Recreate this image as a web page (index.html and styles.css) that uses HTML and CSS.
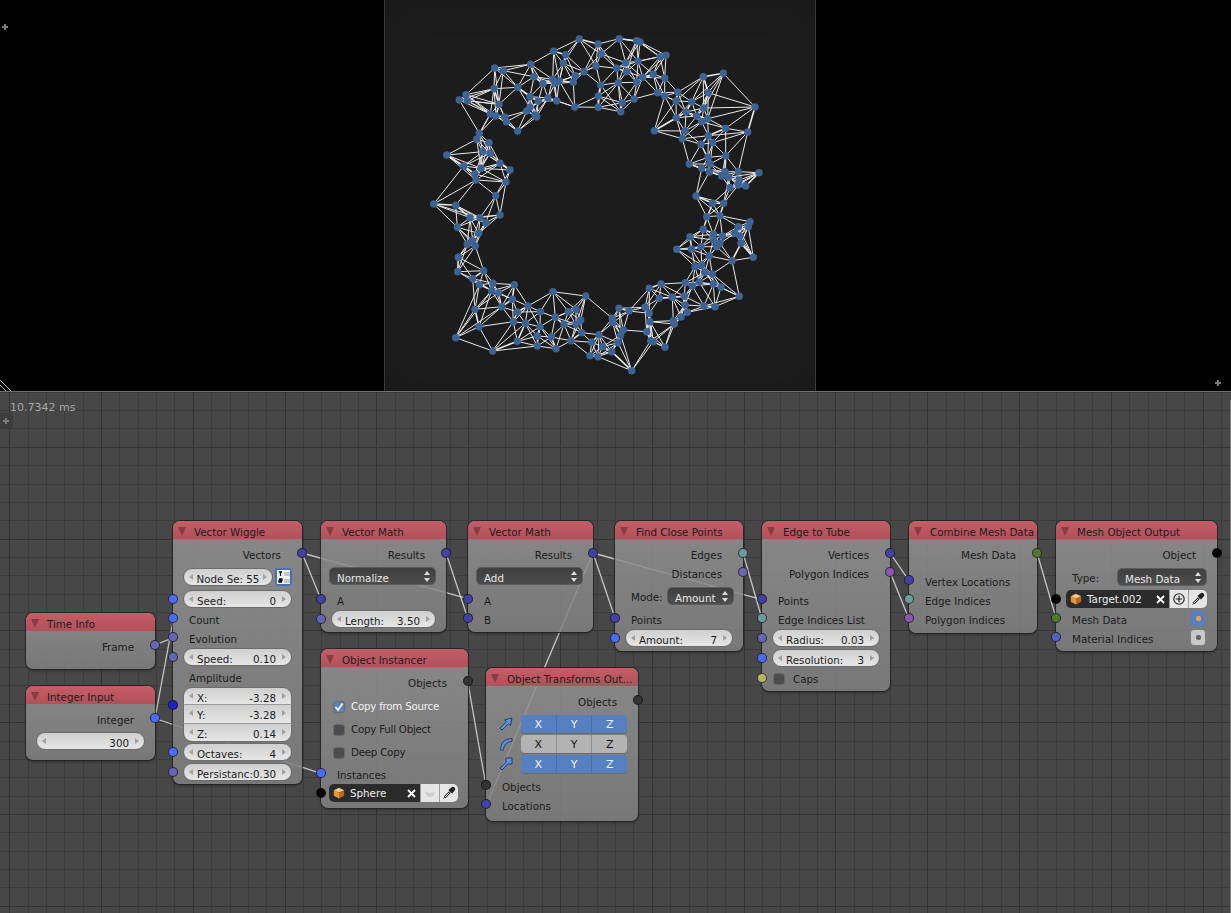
FILE: index.html
```html
<!DOCTYPE html>
<html lang="en">
<head>
<meta charset="utf-8">
<title>Animation Nodes</title>
<link rel="stylesheet" href="styles.css">
</head>
<body>
<section class="viewport">
  <span class="plus plus-tl"></span>
  <div class="camera">
    <svg id="mesh" class="mesh-view" viewBox="385 0 430 391" width="430" height="391"></svg>
  </div>
  <span class="plus plus-br"></span>
  <svg class="corner" viewBox="0 0 12 14" width="12" height="14">
    <path d="M0 3 L11 14 M0 8 L6 14" stroke="#b8b8b8" fill="none"/>
  </svg>
</section>

<section class="editor">
  <div class="timing">10.7342 ms</div>
  <div class="corner-btn"><span class="plus"></span></div>

  <svg class="wires" viewBox="0 391 1231 522" width="1231" height="522">
    <path d="M155 645 L173.5 637.7"/>
    <path d="M155 718.5 L173.5 618.5"/>
    <path d="M155 718.5 L320.7 773.3"/>
    <path d="M302 553 L320.7 598.7"/>
    <path d="M302 553 L467.7 598.7"/>
    <path d="M446 553 L467.7 618"/>
    <path d="M593 553 L615 618"/>
    <path d="M593 553 L762 599.7"/>
    <path d="M593 553 L486 806"/>
    <path d="M743 553 L762 619"/>
    <path d="M467.7 681.5 L486 786"/>
    <path d="M890 553 L909 580.7"/>
    <path d="M890 572 L909 619"/>
    <path d="M1037 552.7 L1056 618"/>
  </svg>

  <article class="node n-time">
    <header class="head"><i class="tri"></i>Time Info</header>
    <div class="body">
      <div class="row out"><span>Frame</span><i class="sock sock-r float"></i></div>
    </div>
  </article>

  <article class="node n-int">
    <header class="head"><i class="tri"></i>Integer Input</header>
    <div class="body">
      <div class="row out"><span>Integer</span><i class="sock sock-r int"></i></div>
      <div class="row gap4"><div class="num"><i class="al"></i><span></span><span>300</span><i class="ar"></i></div></div>
    </div>
  </article>

  <article class="node n-wiggle">
    <header class="head"><i class="tri"></i>Vector Wiggle</header>
    <div class="body">
      <div class="row out"><span>Vectors</span><i class="sock sock-r vec"></i></div>
      <div class="row gap4 split">
        <div class="num num-c"><i class="al"></i><span>Node Se: 55</span><i class="ar"></i></div>
        <div class="listbtn">
          <svg viewBox="0 0 14 14" width="14" height="14"><rect width="14" height="14" fill="#f2f2f2"/><path d="M2 2 H5 M3.5 2 V6 M2 9 H5 V10.5 H2 V12 H5" stroke="#111" stroke-width="1.3" fill="none"/><path d="M7 3 H13 M7 5 H13 M7 10 H13 M7 12 H13" stroke="#999"/></svg>
        </div>
      </div>
      <div class="row gap4"><i class="sock int"></i><div class="num"><i class="al"></i><span>Seed:</span><span>0</span><i class="ar"></i></div></div>
      <div class="row in"><i class="sock int"></i><span>Count</span></div>
      <div class="row in"><i class="sock float"></i><span>Evolution</span></div>
      <div class="row"><i class="sock float"></i><div class="num"><i class="al"></i><span>Speed:</span><span>0.10</span><i class="ar"></i></div></div>
      <div class="row in"><span>Amplitude</span></div>
      <div class="vecgroup">
        <i class="sock sock-group vecdeep"></i>
        <div class="num num-top"><i class="al"></i><span>X:</span><span>-3.28</span><i class="ar"></i></div>
        <div class="num num-mid"><i class="al"></i><span>Y:</span><span>-3.28</span><i class="ar"></i></div>
        <div class="num num-bot"><i class="al"></i><span>Z:</span><span>0.14</span><i class="ar"></i></div>
      </div>
      <div class="row"><i class="sock int"></i><div class="num"><i class="al"></i><span>Octaves:</span><span>4</span><i class="ar"></i></div></div>
      <div class="row"><i class="sock float"></i><div class="num"><i class="al"></i><span>Persistanc:</span><span>0.30</span><i class="ar"></i></div></div>
    </div>
  </article>

  <article class="node n-math1">
    <header class="head"><i class="tri"></i>Vector Math</header>
    <div class="body">
      <div class="row out"><span>Results</span><i class="sock sock-r vec"></i></div>
      <div class="row gap4"><div class="enum"><span>Normalize</span><i class="updown"></i></div></div>
      <div class="row gap4 in"><i class="sock vec"></i><span>A</span></div>
      <div class="row"><i class="sock float"></i><div class="num"><i class="al"></i><span>Length:</span><span>3.50</span><i class="ar"></i></div></div>
    </div>
  </article>

  <article class="node n-math2">
    <header class="head"><i class="tri"></i>Vector Math</header>
    <div class="body">
      <div class="row out"><span>Results</span><i class="sock sock-r vec"></i></div>
      <div class="row gap4"><div class="enum"><span>Add</span><i class="updown"></i></div></div>
      <div class="row gap4 in"><i class="sock vec"></i><span>A</span></div>
      <div class="row in"><i class="sock vec"></i><span>B</span></div>
    </div>
  </article>

  <article class="node n-inst">
    <header class="head"><i class="tri"></i>Object Instancer</header>
    <div class="body">
      <div class="row out"><span>Objects</span><i class="sock sock-r objlist"></i></div>
      <div class="row-check first"><span class="check on"><svg viewBox="0 0 12 12" width="12" height="12"><path d="M2.5 6 L5 9 L9.5 2.5" stroke="#fff" stroke-width="1.8" fill="none"/></svg></span><span class="light">Copy from Source</span></div>
      <div class="row-check"><span class="check"></span><span>Copy Full Object</span></div>
      <div class="row-check"><span class="check"></span><span>Deep Copy</span></div>
      <div class="row in"><i class="sock int"></i><span>Instances</span></div>
      <div class="row"><i class="sock obj"></i>
        <div class="idfield">
          <div class="idname">
            <svg class="cube" viewBox="0 0 12 12" width="12" height="12"><path d="M6 .8 L11.2 3.2 L6 5.8 L.8 3.2 Z" fill="#f5c98c"/><path d="M.8 3.2 L6 5.8 V11.4 L.8 8.8 Z" fill="#e8953a"/><path d="M11.2 3.2 L6 5.8 V11.4 L11.2 8.8 Z" fill="#b96a1e"/></svg>
            <span class="idtext">Sphere</span>
            <svg class="xmark" viewBox="0 0 9 9" width="9" height="9"><path d="M1 1 L8 8 M8 1 L1 8" stroke="#fff" stroke-width="1.8"/></svg>
          </div>
          <div class="idbtn"><svg viewBox="0 0 14 14" width="14" height="14"><path d="M1.5 5 Q7 9 12.5 5 Q11 11 7 11 Q3 11 1.5 5 Z" fill="#cfcfcf"/></svg></div>
          <div class="idbtn"><svg viewBox="0 0 14 14" width="14" height="14"><path d="M2.5 11.5 L8 6" stroke="#222" stroke-width="2.4"/><path d="M2.8 11.2 L7.4 6.6" stroke="#eee" stroke-width="1"/><path d="M1.5 12.5 L2.5 11.5" stroke="#222"/><path d="M6.4 4 L10 7.6 L12.5 4.8 A2 2 0 0 0 9.2 1.5 Z" fill="#222"/></svg></div>
        </div>
      </div>
    </div>
  </article>

  <article class="node n-trans">
    <header class="head"><i class="tri"></i>Object Transforms Out…</header>
    <div class="body">
      <div class="row out"><span>Objects</span><i class="sock sock-r objlist"></i></div>
      <div class="xyz-row first">
        <svg viewBox="0 0 14 14" width="14" height="14"><path d="M1 11 L7.5 4.8 L5.5 3 L13 1 L11.5 8.5 L9.5 6.8 L3 13 Z" fill="#5f95dc" stroke="#1f3d68"/></svg>
        <div class="xyz on"><span>X</span><span>Y</span><span>Z</span></div>
      </div>
      <div class="xyz-row">
        <svg viewBox="0 0 14 14" width="14" height="14"><path d="M1.5 13 C1.5 6 6 1.5 13 1.5 L13 4.5 C8 4.5 4.5 8 4.5 13 Z" fill="#5f95dc" stroke="#1f3d68"/></svg>
        <div class="xyz"><span>X</span><span>Y</span><span>Z</span></div>
      </div>
      <div class="xyz-row">
        <svg viewBox="0 0 14 14" width="14" height="14"><path d="M1 11 L7 5.5 V1 H13 V7 H8.8 L3 13 Z" fill="#5f95dc" stroke="#1f3d68"/></svg>
        <div class="xyz on"><span>X</span><span>Y</span><span>Z</span></div>
      </div>
      <div class="row in gap3"><i class="sock objlist"></i><span>Objects</span></div>
      <div class="row in"><i class="sock vec"></i><span>Locations</span></div>
    </div>
  </article>

  <article class="node n-close">
    <header class="head"><i class="tri"></i>Find Close Points</header>
    <div class="body">
      <div class="row out"><span>Edges</span><i class="sock sock-r edge"></i></div>
      <div class="row out"><span>Distances</span><i class="sock sock-r dist"></i></div>
      <div class="row gap4 labelled"><span>Mode:</span><div class="enum enum-short"><span>Amount</span><i class="updown"></i></div></div>
      <div class="row gap4 in"><i class="sock vec"></i><span>Points</span></div>
      <div class="row"><i class="sock int"></i><div class="num"><i class="al"></i><span>Amount:</span><span>7</span><i class="ar"></i></div></div>
    </div>
  </article>

  <article class="node n-tube">
    <header class="head"><i class="tri"></i>Edge to Tube</header>
    <div class="body">
      <div class="row out"><span>Vertices</span><i class="sock sock-r vec"></i></div>
      <div class="row out"><span>Polygon Indices</span><i class="sock sock-r poly"></i></div>
      <div class="row gap8 in"><i class="sock vec"></i><span>Points</span></div>
      <div class="row in"><i class="sock edge"></i><span>Edge Indices List</span></div>
      <div class="row gap1"><i class="sock float"></i><div class="num"><i class="al"></i><span>Radius:</span><span>0.03</span><i class="ar"></i></div></div>
      <div class="row"><i class="sock int"></i><div class="num"><i class="al"></i><span>Resolution:</span><span>3</span><i class="ar"></i></div></div>
      <div class="row gap1 row-caps"><i class="sock bool"></i><span class="check"></span><span class="caps-text">Caps</span></div>
    </div>
  </article>

  <article class="node n-combine">
    <header class="head"><i class="tri"></i>Combine Mesh Data</header>
    <div class="body">
      <div class="row out"><span>Mesh Data</span><i class="sock sock-r meshdata"></i></div>
      <div class="row gap8 in"><i class="sock vec"></i><span>Vertex Locations</span></div>
      <div class="row in"><i class="sock edge"></i><span>Edge Indices</span></div>
      <div class="row in"><i class="sock poly"></i><span>Polygon Indices</span></div>
    </div>
  </article>

  <article class="node n-output">
    <header class="head"><i class="tri"></i>Mesh Object Output</header>
    <div class="body">
      <div class="row out"><span>Object</span><i class="sock sock-r obj"></i></div>
      <div class="row gap4 labelled"><span>Type:</span><div class="enum enum-short"><span>Mesh Data</span><i class="updown"></i></div></div>
      <div class="row gap4"><i class="sock obj"></i>
        <div class="idfield">
          <div class="idname">
            <svg class="cube" viewBox="0 0 12 12" width="12" height="12"><path d="M6 .8 L11.2 3.2 L6 5.8 L.8 3.2 Z" fill="#f5c98c"/><path d="M.8 3.2 L6 5.8 V11.4 L.8 8.8 Z" fill="#e8953a"/><path d="M11.2 3.2 L6 5.8 V11.4 L11.2 8.8 Z" fill="#b96a1e"/></svg>
            <span class="idtext">Target.002</span>
            <svg class="xmark" viewBox="0 0 9 9" width="9" height="9"><path d="M1 1 L8 8 M8 1 L1 8" stroke="#fff" stroke-width="1.8"/></svg>
          </div>
          <div class="idbtn"><svg viewBox="0 0 14 14" width="14" height="14"><circle cx="7" cy="7" r="5.2" fill="none" stroke="#222" stroke-width="1.1"/><path d="M7 3.8 V10.2 M3.8 7 H10.2" stroke="#222" stroke-width="1.2"/></svg></div>
          <div class="idbtn"><svg viewBox="0 0 14 14" width="14" height="14"><path d="M2.5 11.5 L8 6" stroke="#222" stroke-width="2.4"/><path d="M2.8 11.2 L7.4 6.6" stroke="#eee" stroke-width="1"/><path d="M1.5 12.5 L2.5 11.5" stroke="#222"/><path d="M6.4 4 L10 7.6 L12.5 4.8 A2 2 0 0 0 9.2 1.5 Z" fill="#222"/></svg></div>
        </div>
      </div>
      <div class="row in row-toggle"><i class="sock meshdata"></i><span>Mesh Data</span><span class="dot-btn on"><i></i></span></div>
      <div class="row in row-toggle"><i class="sock vecblue"></i><span>Material Indices</span><span class="dot-btn"><i></i></span></div>
    </div>
  </article>
</section>
<script src="mesh.js"></script>
</body>
</html>
```

FILE: styles.css
```css
* { box-sizing: border-box; }
html, body { margin: 0; padding: 0; background: #000; }
body {
  width: 1231px;
  height: 913px;
  overflow: hidden;
  font: 10.3px/19px "DejaVu Sans", "Liberation Sans", sans-serif;
  color: #1c1c1c;
}
.viewport {
  position: relative;
  height: 391px;
  background: #000;
  display: flex;
  padding-left: 384px;
}
.camera {
  width: 432px;
  height: 391px;
  background: #1c1c1c;
  border-left: 1px solid #3a3a3a;
  border-right: 1px solid #3a3a3a;
  box-shadow: inset 0 0 40px rgba(0, 0, 0, .12);
  display: flex;
}
.mesh-view { display: block; }
.mesh-view .edge-line { stroke: #e9e9e9; stroke-width: 1; }
.mesh-view .edge-line.thick { stroke-width: 1.6; }
.mesh-view .vert { fill: #3d6395; }

.plus {
  display: block;
  width: 6px;
  height: 6px;
  background:
    linear-gradient(#7a7a7a, #7a7a7a) center / 6px 2px no-repeat,
    linear-gradient(#7a7a7a, #7a7a7a) center / 2px 6px no-repeat;
}
.plus-tl { position: absolute; left: 2px; top: 24px; }
.plus-br { position: absolute; right: 10px; top: 380px; }
.corner { position: absolute; left: 0; bottom: 0; }

.editor {
  position: relative;
  height: 522px;
  overflow: hidden;
  background-color: #474747;
  background-image:
    repeating-linear-gradient(to right, transparent 0 9.2px, #343434 9.2px 10.2px, transparent 10.2px 91.8px),
    repeating-linear-gradient(to bottom, transparent 0 55.8px, #343434 55.8px 56.8px, transparent 56.8px 91.8px),
    repeating-linear-gradient(to right, transparent 0 9.2px, #3c3c3c 9.2px 10.2px, transparent 10.2px 18.36px),
    repeating-linear-gradient(to bottom, transparent 0 .72px, #3c3c3c .72px 1.72px, transparent 1.72px 18.36px);
  box-shadow: inset 0 1px 0 #707070;
}
.editor::after {
  content: "";
  position: absolute;
  right: 0;
  top: 9px;
  bottom: 0;
  width: 1px;
  background: #7c7c7c;
}
.timing {
  position: absolute;
  left: 10px;
  top: 7px;
  color: #a6a6a6;
  font-size: 11px;
}
.corner-btn {
  position: absolute;
  left: -2px;
  top: 22px;
  width: 15px;
  height: 15px;
  border-radius: 4px;
  background: #3d3d3d;
  display: flex;
  align-items: center;
  justify-content: center;
}
.wires {
  position: absolute;
  left: 0;
  top: 0;
  fill: none;
  stroke: #c4c4c4;
  stroke-width: 1.3;
}

.node {
  position: absolute;
  border-radius: 7px;
  box-shadow: 0 0 0 1px rgba(32, 32, 32, .75), 0 2px 3px rgba(0, 0, 0, .3);
  background: linear-gradient(rgba(146, 146, 146, .86), rgba(128, 128, 128, .86));
}
.head {
  height: 18px;
  line-height: 23px;
  padding-left: 21px;
  border-radius: 7px 7px 0 0;
  background: linear-gradient(#c45d66, #b1515a);
  position: relative;
  white-space: nowrap;
}
.tri {
  position: absolute;
  left: 5px;
  top: 6px;
  width: 0;
  height: 0;
  border-left: 4.5px solid transparent;
  border-right: 4.5px solid transparent;
  border-top: 9px solid #883c43;
}
.body { padding-top: 5px; }

.n-time    { left: 26px;   top: 222px; width: 129px; height: 56px; }
.n-int     { left: 26px;   top: 295px; width: 129px; height: 74px; }
.n-wiggle  { left: 173px;  top: 130px; width: 129px; height: 263px; }
.n-math1   { left: 321px;  top: 130px; width: 125px; height: 111px; }
.n-math2   { left: 468px;  top: 130px; width: 125px; height: 111px; }
.n-inst    { left: 321px;  top: 258px; width: 147px; height: 159px; }
.n-trans   { left: 486px;  top: 277px; width: 152px; height: 153px; }
.n-close   { left: 615px;  top: 130px; width: 128px; height: 130px; }
.n-tube    { left: 762px;  top: 130px; width: 128px; height: 170px; }
.n-combine { left: 909px;  top: 130px; width: 128px; height: 112px; }
.n-output  { left: 1056px; top: 130px; width: 161px; height: 130px; }

.row {
  position: relative;
  height: 19px;
  line-height: 23px;
  white-space: nowrap;
}
.gap1 { margin-top: 1px; }
.gap3 { margin-top: 3px; }
.gap4 { margin-top: 4px; }
.gap8 { margin-top: 8px; }
.out { text-align: right; padding-right: 21px; }
.in { padding-left: 16px; }
.labelled { display: flex; justify-content: space-between; padding-left: 16px; }
.split { display: flex; padding: 1px 10px 0 10px; gap: 2px; }
.split .num { margin: 0; flex: 1; }
.listbtn {
  width: 17px;
  height: 18px;
  border: 2px solid #4772b3;
  border-radius: 3px;
  background: #f2f2f2;
  display: flex;
  align-items: center;
  justify-content: center;
  overflow: hidden;
}
.listbtn svg { flex: none; }

.sock {
  position: absolute;
  left: -5px;
  top: 4px;
  width: 10px;
  height: 10px;
  border-radius: 50%;
  border: 1px solid rgba(20, 20, 20, .75);
  z-index: 2;
}
.sock-r { left: auto; right: -5px; }
.sock-group { top: 13px; }
.int { background: #4a6cf7; }
.float { background: #6565b5; }
.vec { background: #4242a4; }
.vecdeep { background: #2222c4; }
.vecblue { background: #4e62c4; }
.objlist { background: #333; }
.obj { background: #000; }
.edge { background: #6a9c99; }
.dist { background: #6a6aaa; }
.poly { background: #8a55ae; }
.meshdata { background: #4e7a2e; }
.bool { background: #b5b566; }

.num {
  position: relative;
  height: 18px;
  margin: 1px 10px 0;
  padding: 0 15px 0 13px;
  line-height: 20px;
  display: flex;
  justify-content: space-between;
  border-radius: 9px;
  border: 1px solid #6c6c6c;
  background: linear-gradient(#cfcfcf, #e6e6e6);
}
.num-c { justify-content: center; padding: 0; }
.al, .ar {
  position: absolute;
  top: 5px;
  width: 0;
  height: 0;
  border-top: 3.5px solid transparent;
  border-bottom: 3.5px solid transparent;
}
.al { left: 5px; border-right: 4px solid #a0a0a0; }
.ar { right: 5px; border-left: 4px solid #a0a0a0; }
.vecgroup { position: relative; margin-top: 1px; height: 55px; padding: 0 10px; }
.vecgroup .num { margin: 0; height: 18.3px; }
.num-top { border-radius: 9px 9px 0 0; border-bottom-color: #9a9a9a; }
.num-mid { border-radius: 0; border-top: 0; border-bottom-color: #9a9a9a; }
.num-bot { border-radius: 0 0 9px 9px; border-top: 0; }

.enum {
  position: relative;
  height: 18px;
  margin: 1px 10px 0 8px;
  padding-left: 7px;
  line-height: 20px;
  color: #e8e8e8;
  border-radius: 5px;
  border: 1px solid #5c5c5c;
  background: linear-gradient(#3f3f3f, #4d4d4d);
}
.enum-short { margin: 1px 9px 0 0; flex: none; }
.n-close .enum-short { width: 67px; }
.n-output .enum-short { width: 90px; margin-right: 10px; }
.updown { position: absolute; right: 4px; top: 3px; width: 7px; height: 11px; }
.updown::before, .updown::after {
  content: "";
  position: absolute;
  left: 0;
  width: 0;
  height: 0;
  border-left: 3.5px solid transparent;
  border-right: 3.5px solid transparent;
}
.updown::before { top: 0; border-bottom: 4.5px solid #dcdcdc; }
.updown::after { bottom: 0; border-top: 4.5px solid #dcdcdc; }

.row-check {
  display: flex;
  align-items: center;
  gap: 6px;
  height: 23px;
  padding-left: 12px;
  line-height: 23px;
  letter-spacing: -.25px;
}
.row-check.first { margin-top: 4px; }
.check {
  flex: none;
  width: 12px;
  height: 12px;
  border-radius: 3px;
  background: #4c4c4c;
  border: 1px solid #6a6a6a;
  display: block;
}
.check svg { display: block; margin: -1px; }
.check.on { background: #5680c2; }
.light { color: #f2f2f2; }
.row-caps { display: flex; align-items: center; gap: 8px; padding-left: 11px; }
.caps-text { padding-top: 1px; }

.idfield {
  display: flex;
  height: 18px;
  margin: 1px 10px 0 8px;
  border-radius: 5px;
  overflow: hidden;
  position: relative;
}
.n-output .idfield { margin-left: 10px; margin-right: 10px; }
.idname {
  flex: 1;
  display: flex;
  align-items: center;
  padding-left: 4px;
  background: #2b2b2b;
  color: #efefef;
}
.idtext { flex: 1; padding-left: 5px; line-height: 20px; }
.xmark { margin-right: 4px; }
.idbtn {
  width: 19px;
  flex: none;
  display: flex;
  align-items: center;
  justify-content: center;
  background: #e6e6e6;
  border-left: 1px solid #9c9c9c;
}

.xyz-row {
  display: flex;
  align-items: center;
  gap: 8px;
  height: 18px;
  margin-top: 2px;
  padding-left: 13px;
}
.xyz-row.first { margin-top: 5px; }
.xyz {
  width: 106px;
  height: 18px;
  display: flex;
  border-radius: 4px;
  overflow: hidden;
  background: #b3b3b3;
  box-shadow: 0 1px 0 #6a6a6a;
  line-height: 20px;
  text-align: center;
  color: #111;
  font-size: 11px;
}
.xyz span { flex: 1; border-left: 1px solid #8d8d8d; }
.xyz span:first-child { border-left: 0; }
.xyz.on { background: #5680c2; color: #f4f4f4; }
.xyz.on span { border-left-color: #4c6fa6; }

.row-toggle { display: flex; justify-content: space-between; padding-right: 11px; }
.dot-btn {
  flex: none;
  width: 16px;
  height: 17px;
  margin-top: 1px;
  border-radius: 4px;
  background: #c9c9c9;
  border: 1px solid #7c7c7c;
  display: flex;
  align-items: center;
  justify-content: center;
}
.dot-btn i { flex: none; width: 5px; height: 5px; border-radius: 2px; background: #666; }
.dot-btn.on { background: #5680c2; }
.dot-btn.on i { background: #f0a040; }
```

FILE: mesh.js
```js
(function () {
  var upper = [
    [478,57],[534,72],[598,56],[650,62],[660,66],[401,94],[437,104],[430,130],[543,102],[528,138],
    [617,128],[654,124],[590,145],[620,155],[720,110],[738,106],[700,163],[734,174],[668,172],[650,187],
    [595,188],[542,195],[492,155],[466,167],[460,187],[224,144],[250,152],[332,133],[342,170],[369,191],
    [398,178],[418,183],[405,190],[293,202],[222,206],[138,224],[118,240],[142,242],[237,253],[330,230],
    [355,244],[384,234],[410,242],[464,261],[535,262],[535,228],[607,248],[642,237],[602,275],[330,262],
    [320,273],[345,285],[350,290],[211,282],[254,291],[259,305],[228,288],[293,333],[178,340],[170,358],
    [207,368],[188,395],[210,400],[80,405],[131,438],[183,445],[240,430],[270,450],[168,480],[258,486],
    [165,462],[227,527],[703,332],[1005,261],[910,160],[850,170],[865,218],[773,217],[713,218],[734,228],
    [768,243],[815,245],[851,264],[798,276],[769,293],[830,288],[845,305],[863,296],[917,325],[983,336],
    [795,333],[787,356],[843,373],[865,347],[878,368],[917,407],[864,412],[808,432],[870,432],[845,445],
    [868,456],[915,455],[905,468],[926,472],[955,455],[1017,458],[958,480],[930,503],[977,498],[955,495],
    [828,528]
  ];
  var lower = [
    [41,12],[107,16],[150,53],[180,53],[197,68],[240,45],[112,82],[176,100],[158,122],[142,133],
    [166,138],[115,172],[113,215],[191,212],[158,236],[178,254],[219,250],[283,254],[215,272],[236,278],
    [277,298],[165,328],[245,320],[324,318],[292,336],[361,335],[399,275],[177,380],[280,365],[316,370],
    [360,380],[406,352],[468,328],[445,335],[107,413],[218,453],[292,424],[352,408],[394,411],[352,438],
    [408,446],[432,373],[468,373],[482,360],[453,422],[485,398],[497,288],[597,325],[627,333],[675,322],
    [577,355],[578,368],[610,390],[602,405],[537,404],[515,427],[548,440],[594,428],[575,455],[510,467],
    [534,470],[635,512],[688,265],[723,252],[718,295],[757,292],[793,289],[795,315],[802,337],[783,351],
    [760,362],[763,372],[688,340],[690,365],[680,395],[692,422],[700,425],[735,442],[796,248],[817,258],
    [838,247],[825,200],[845,195],[855,217],[877,222],[880,252],[903,262],[885,320],[852,318],[958,289],
    [936,182],[1000,172],[990,65],[985,80],[955,80],[945,100],[960,108],[963,130],[907,108],[880,103],
    [850,88],[860,50],[900,47],[878,10],[911,10],[810,110],[815,148],[770,148],[843,140],[868,168],
    [890,140],[900,130],[880,120]
  ];
  var pts = upper.map(function (p) { return [420 + p[0] / 3, 20 + p[1] / 3]; })
    .concat(lower.map(function (p) { return [420 + p[0] / 3, 200 + p[1] / 3]; }));

  var NS = "http://www.w3.org/2000/svg";
  var svg = document.getElementById("mesh");
  var seen = {};
  var K = 6;

  function add(tag, cls, attrs) {
    var el = document.createElementNS(NS, tag);
    el.setAttribute("class", cls);
    Object.keys(attrs).forEach(function (k) { el.setAttribute(k, attrs[k]); });
    svg.appendChild(el);
  }

  pts.forEach(function (p, i) {
    var near = pts.map(function (q, j) {
      return { j: j, d: (p[0] - q[0]) * (p[0] - q[0]) + (p[1] - q[1]) * (p[1] - q[1]) };
    }).filter(function (o) { return o.j !== i; })
      .sort(function (a, b) { return a.d - b.d; })
      .slice(0, K);
    near.forEach(function (o, rank) {
      var key = Math.min(i, o.j) + "-" + Math.max(i, o.j);
      if (seen[key]) return;
      seen[key] = true;
      var q = pts[o.j];
      add("line", rank < 1 ? "edge-line thick" : "edge-line", {
        x1: p[0].toFixed(1), y1: p[1].toFixed(1), x2: q[0].toFixed(1), y2: q[1].toFixed(1)
      });
    });
  });
  pts.forEach(function (p) {
    add("circle", "vert", { cx: p[0].toFixed(1), cy: p[1].toFixed(1), r: 3.7 });
  });
})();
```
